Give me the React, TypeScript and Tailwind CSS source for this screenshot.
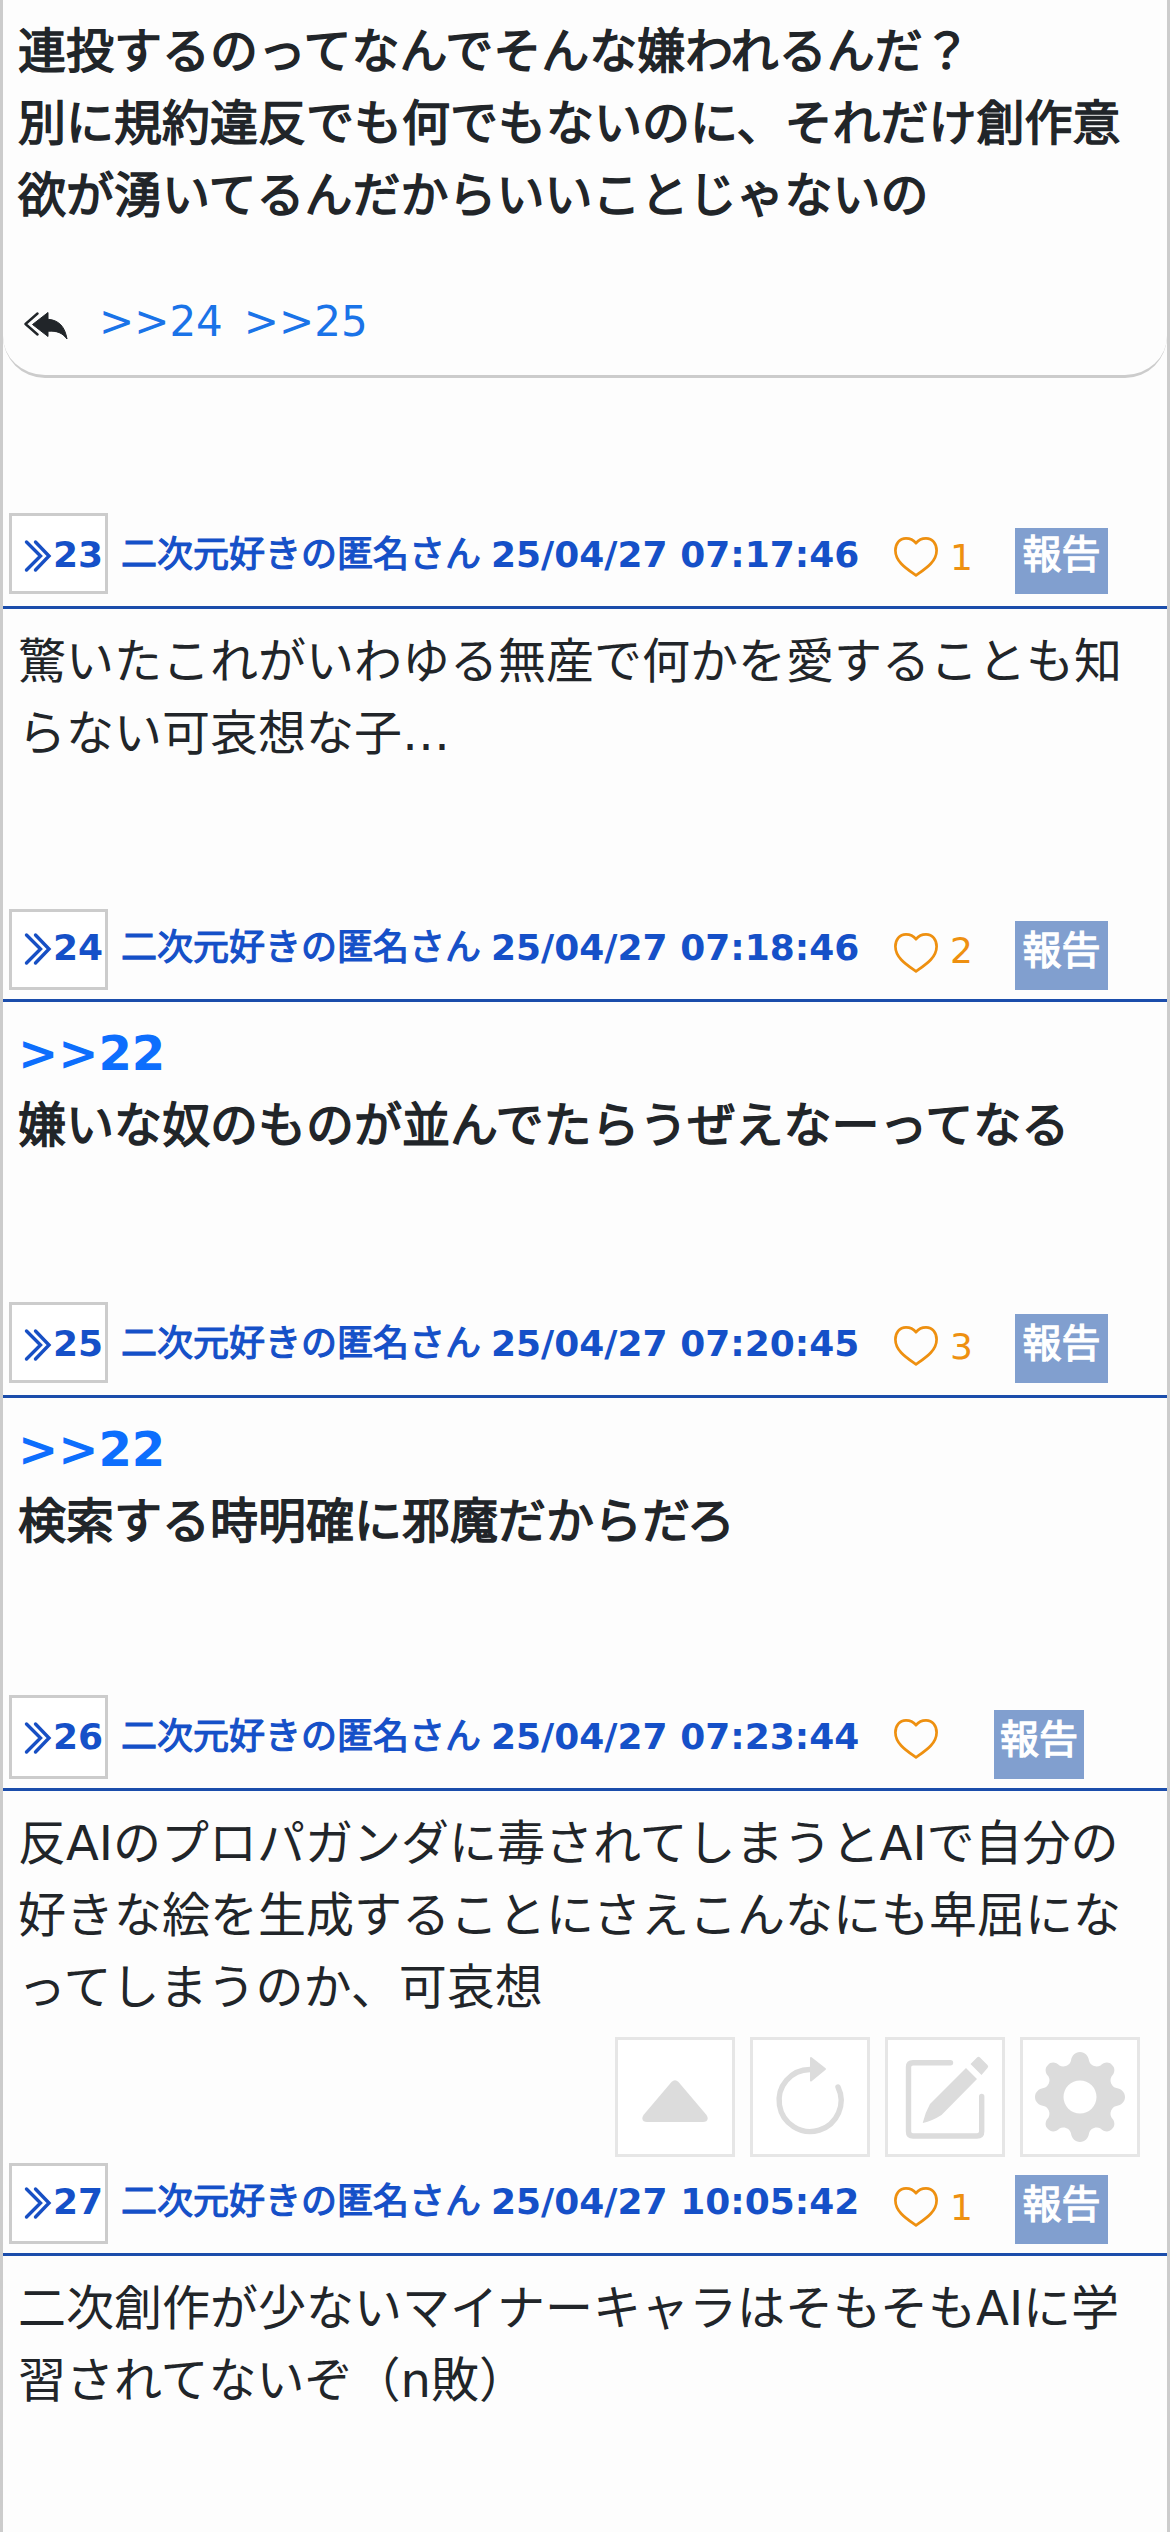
import clsx from "clsx";

interface Post {
  id: number;
  date: string;
  likes?: number;
  anchor?: string;
  lines: string[];
  bold?: boolean;
  height: string;
  header: string;
  box: string;
  number: string;
  name: string;
  count: string;
  report: string;
}

const posts: Post[] = [
  {
    id: 23,
    date: "25/04/27 07:17:46",
    likes: 1,
    lines: ["驚いたこれがいわゆる無産で何かを愛することも知", "らない可哀想な子…"],
    height: "h-[396px]",
    header: "h-[96px]",
    box: "h-[81px]",
    number: "pt-[23px]",
    name: "mt-[15px]",
    count: "mt-[22px]",
    report: "mt-[15px] h-[66px] w-[93px] leading-[54px]",
  },
  {
    id: 24,
    date: "25/04/27 07:18:46",
    likes: 2,
    anchor: ">>22",
    lines: ["嫌いな奴のものが並んでたらうぜえなーってなる"],
    bold: true,
    height: "h-[393px]",
    header: "h-[93px]",
    box: "h-[81px]",
    number: "pt-[20px]",
    name: "mt-[12px]",
    count: "mt-[19px]",
    report: "mt-[12px] h-[69px] w-[93px] leading-[60px]",
  },
  {
    id: 25,
    date: "25/04/27 07:20:45",
    likes: 3,
    anchor: ">>22",
    lines: ["検索する時明確に邪魔だからだろ"],
    bold: true,
    height: "h-[393px]",
    header: "h-[96px]",
    box: "h-[81px]",
    number: "pt-[23px]",
    name: "mt-[15px]",
    count: "mt-[22px]",
    report: "mt-[12px] h-[69px] w-[93px] leading-[60px]",
  },
  {
    id: 26,
    date: "25/04/27 07:23:44",
    lines: [
      "反AIのプロパガンダに毒されてしまうとAIで自分の",
      "好きな絵を生成することにさえこんなにも卑屈にな",
      "ってしまうのか、可哀想",
    ],
    height: "h-[468px]",
    header: "h-[96px]",
    box: "h-[84px]",
    number: "pt-[23px]",
    name: "mt-[15px]",
    count: "mt-[22px]",
    report: "mt-[15px] h-[69px] w-[90px] leading-[60px]",
  },
  {
    id: 27,
    date: "25/04/27 10:05:42",
    likes: 1,
    lines: ["二次創作が少ないマイナーキャラはそもそもAIに学", "習されてないぞ（n敗）"],
    height: "h-[369px]",
    header: "h-[93px]",
    box: "h-[81px]",
    number: "pt-[20px]",
    name: "mt-[12px]",
    count: "mt-[22px]",
    report: "mt-[12px] h-[69px] w-[93px] leading-[60px]",
  },
];

const ReplyAll = () => (
  <svg width="44" height="28" viewBox="0 0 44 28" className="mt-[8px]">
    <path
      d="M24 0.5V7.3C35 8 41 15 43 27C38 20.5 33 18.8 24 19.2V24.5L8.5 12.5Z"
      fill="#212529"
      stroke="#212529"
      strokeLinejoin="round"
    />
    <path
      d="M13.5 1.5L1.5 12L13.5 22.5"
      fill="none"
      stroke="#212529"
      strokeWidth="2.4"
      strokeLinecap="round"
      strokeLinejoin="round"
    />
  </svg>
);

const Chevrons = () => (
  <svg width="28" height="34" viewBox="0 0 28 34" fill="none" stroke="#174fc4" strokeWidth="3.4" strokeLinecap="round">
    <path d="M2.5 3L16.5 17L2.5 31" />
    <path d="M11.5 3L25 17L11.5 31" />
  </svg>
);

const Heart = () => (
  <svg width="44" height="40" viewBox="0 0 44 40" fill="none" stroke="#ee9010" strokeWidth="2.7" strokeLinejoin="round">
    <path d="M22 6.2C25 2.4 28.5 1.4 32 1.4C38.5 1.4 42.6 6.5 42.6 13.5C42.6 25 31 32 22 38.4C13 32 1.4 25 1.4 13.5C1.4 6.5 5.5 1.4 12 1.4C15.5 1.4 19 2.4 22 6.2Z" />
  </svg>
);

const PostHeader = ({ post }: { post: Post }) => (
  <div className={clsx("flex items-start border-b-[3px] border-[#1b4dab] pl-[6px]", post.header)}>
    <a className={clsx("flex w-[99px] shrink-0 border-[3px] border-[#ccc] bg-white pl-[12px]", post.box, post.number)}>
      <Chevrons />
      <span className="ml-[1px] -mt-[2px] text-[36px] leading-[36px] font-bold text-[#1550c8]">{post.id}</span>
    </a>
    <div
      className={clsx(
        "ml-[13px] flex w-[771px] shrink-0 gap-[10px] text-[36px] leading-[54px] whitespace-nowrap text-[#1550c8]",
        post.name,
      )}
    >
      <span className="[-webkit-text-stroke:1.2px_#1550c8]">二次元好きの匿名さん</span>
      <span className="font-bold">{post.date}</span>
    </div>
    <div className="mt-[24px] ml-[2px] shrink-0">
      <Heart />
    </div>
    <div
      className={clsx(
        "shrink-0 pl-[12px] text-[36px] leading-[46px] text-[#ee9010]",
        post.count,
        post.likes ? "w-[77px]" : "w-[56px]",
      )}
    >
      {post.likes}
    </div>
    <button
      className={clsx(
        "flex shrink-0 items-start justify-center bg-[#819fcf] text-[39px] text-white [-webkit-text-stroke:1.3px_#fff]",
        post.report,
      )}
    >
      報告
    </button>
  </div>
);

const PostItem = ({ post }: { post: Post }) => (
  <section className={post.height}>
    <PostHeader post={post} />
    <div
      className={clsx(
        "pl-[15px] text-[48px] leading-[72px] whitespace-nowrap text-[#212529]",
        post.bold ? "pt-[15px]" : "pt-[16px]",
      )}
    >
      {post.anchor && <p className="font-bold text-[#0d6efd]">{post.anchor}</p>}
      {post.lines.map((line) => (
        <p key={line} className={clsx(post.bold && "[-webkit-text-stroke:1.5px_#212529]")}>
          {line}
        </p>
      ))}
    </div>
  </section>
);

const toolButton = "flex h-[120px] w-[120px] items-center justify-center border-[3px] border-[#e6e6e6] bg-white";

const Toolbar = () => (
  <nav className="fixed top-[2037px] right-[30px] flex gap-[15px]">
    <button className={toolButton}>
      <svg width="114" height="114" viewBox="0 0 114 114" fill="#dcdcdc">
        <path d="M53.5 42Q57 38.4 60.5 42L88.5 75Q91 79 88.3 81.2Q87 82 85 82H29Q27 82 25.7 81.2Q23 79 25.5 75Z" />
      </svg>
    </button>
    <button className={toolButton}>
      <svg width="114" height="114" viewBox="0 0 114 114" fill="none" stroke="#dcdcdc">
        <path d="M57 29.5A31 31 0 1 0 85 47" strokeWidth="5.4" strokeLinecap="round" />
        <path d="M58 18L72 29L58 40.5Z" fill="#dcdcdc" strokeWidth="2" strokeLinejoin="round" />
      </svg>
    </button>
    <button className={toolButton}>
      <svg width="114" height="114" viewBox="0 0 114 114" fill="none">
        <path
          d="M62.5 22.7H25Q20.5 22.7 20.5 27V91.5Q20.5 96 25 96H89Q93.7 96 93.7 91.5V56.5"
          stroke="#dcdcdc"
          strokeWidth="5.4"
          strokeLinecap="round"
        />
        <path d="M78 28L89 39L53.5 75Q44 81 35 83Q34.5 82.5 35 82Q37 73 42 64Z" fill="#dcdcdc" />
        <path d="M82.5 24L89 17.5Q90.5 16 92 17.5L99.5 25Q101 26.5 99.5 28L93.5 35Z" fill="#dcdcdc" />
      </svg>
    </button>
    <button className={toolButton}>
      <svg width="114" height="114" viewBox="0 0 114 114" fill="#dcdcdc">
        <path
          fillRule="evenodd"
          d="M57 12C62 12 65.3 16 66 20.5C67 25.5 73 28 77.5 25.5C81 22 86 21.5 89 25C92.5 28 92 33 88.5 36.5C86 41 88.5 47 93.5 48C98 48.7 102 52 102 57C102 62 98 65.3 93.5 66C88.5 67 86 73 88.5 77.5C92 81 92.5 86 89 89C86 92.5 81 92 77.5 88.5C73 86 67 88.5 66 93.5C65.3 98 62 102 57 102C52 102 48.7 98 48 93.5C47 88.5 41 86 36.5 88.5C33 92 28 92.5 25 89C21.5 86 22 81 25.5 77.5C28 73 25.5 67 20.5 66C16 65.3 12 62 12 57C12 52 16 48.7 20.5 48C25.5 47 28 41 25.5 36.5C22 33 21.5 28 25 25C28 21.5 33 22 36.5 25.5C41 28 47 25.5 48 20.5C48.7 16 52 12 57 12ZM57 40.5A16.5 16.5 0 1 0 57 73.5A16.5 16.5 0 1 0 57 40.5Z"
        />
      </svg>
    </button>
  </nav>
);

export default function App() {
  return (
    <main className="h-[2532px] w-[1170px] overflow-hidden border-x-[3px] border-[#ccc] bg-[#fdfdfd] font-['DejaVu_Sans','Noto_Sans_CJK_JP',sans-serif]">
      <section className="mb-[135px] h-[378px] rounded-b-[42px] border-b-[3px] border-[#ccc] pt-[15px] pl-[15px]">
        <div className="h-[275px] text-[48px] leading-[72px] whitespace-nowrap text-[#212529] [-webkit-text-stroke:1.5px_#212529]">
          <p>連投するのってなんでそんな嫌われるんだ？</p>
          <p>別に規約違反でも何でもないのに、それだけ創作意</p>
          <p>欲が湧いてるんだからいいことじゃないの</p>
        </div>
        <div className="flex items-center pl-[6px] text-[42px] leading-[63px] text-[#1a73e8]">
          <ReplyAll />
          <a className="ml-[31px]">&gt;&gt;24</a>
          <a className="ml-[21px]">&gt;&gt;25</a>
        </div>
      </section>
      {posts.map((post) => (
        <PostItem key={post.id} post={post} />
      ))}
      <Toolbar />
    </main>
  );
}
